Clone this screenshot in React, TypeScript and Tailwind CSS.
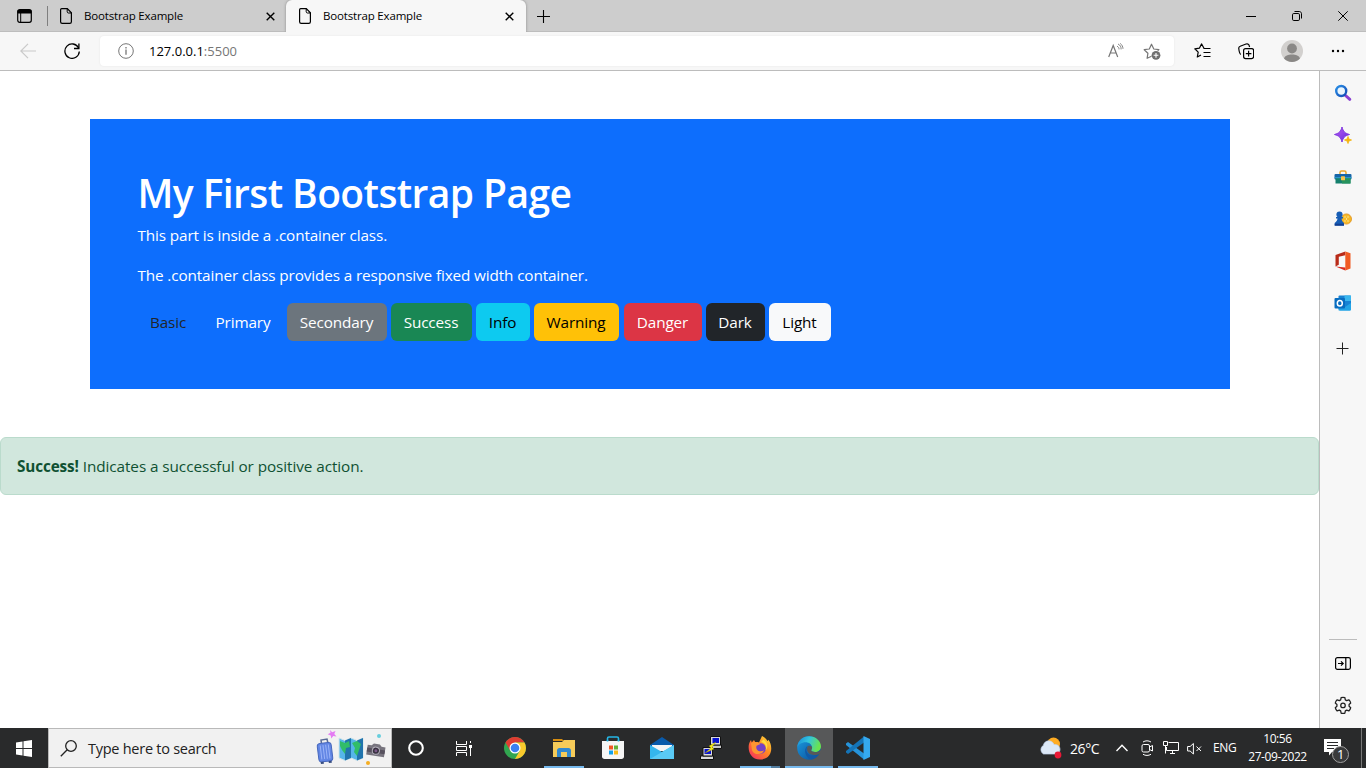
import type { ReactNode } from "react";

type IconProps = { w?: number; h?: number; vb?: string; className?: string; children: ReactNode };

function Icon({ w = 16, h, vb, className = "", children }: IconProps) {
  const height = h ?? w;
  return (
    <svg
      width={w}
      height={height}
      viewBox={vb ?? `0 0 ${w} ${height}`}
      fill="none"
      stroke="currentColor"
      strokeWidth="1"
      className={`block shrink-0 ${className}`}
    >
      {children}
    </svg>
  );
}

function DocIcon() {
  return (
    <Icon w={12} h={16}>
      <path d="M1.7.6h5.6l4.1 4.2v9c0 .9-.7 1.6-1.6 1.6H2.2C1.3 15.400.6 14.700.6 13.800V1.700C.6 1.100 1.100.6 1.700.6z" strokeWidth="1.200" />
      <path d="M7.200.8v3c0 .7.5 1.200 1.200 1.200h3" />
    </Icon>
  );
}

function TabClose() {
  return (
    <Icon w={9}>
      <path d="M.7.7l7.600 7.600M8.300.7L.7 8.300" strokeWidth="1.400" />
    </Icon>
  );
}

function TabStrip() {
  return (
    <div className="flex h-8 shrink-0 bg-[#cdcdcd] text-black shadow-[inset_0_-1px_0_#bdbdbd]">
      <div className="flex w-12 shrink-0 items-center border-r border-transparent pl-[17px]">
        <Icon w={15} h={14}>
          <rect x="0.700" y="0.700" width="13.600" height="12.600" rx="2" strokeWidth="1.200" />
          <path d="M1 1.500h13v2.500H1z" fill="currentColor" />
          <path d="M3.700 4v9" />
        </Icon>
      </div>
      <div className="-ml-px mt-[6px] h-5 w-px bg-[#7f7f7f]" />
      <div className="flex w-[238px] items-center rounded-br-[5px] pl-3">
        <DocIcon />
        <span className="ml-3 w-[182px] whitespace-nowrap text-[11.5px] leading-4 tracking-[-0.170px]">Bootstrap Example</span>
        <TabClose />
      </div>
      <div className="flex w-[240px] items-center rounded-t-[6px] bg-[#f7f7f7] pl-[13px] shadow-[0_0_3px_#888]">
        <DocIcon />
        <span className="ml-3 w-[182px] whitespace-nowrap text-[11.5px] leading-4 tracking-[-0.170px]">Bootstrap Example</span>
        <TabClose />
      </div>
      <div className="flex flex-1 items-center pl-[11px]">
        <Icon w={13}>
          <path d="M6.500 0v13M0 6.500h13" strokeWidth="1.100" />
        </Icon>
      </div>
      <div className="flex w-[46px] items-center justify-center">
        <Icon w={10} h={9}><path d="M0 4.500h10" /></Icon>
      </div>
      <div className="flex w-[46px] items-center justify-center">
        <Icon w={10}>
          <rect x="0.500" y="2.500" width="7" height="7" rx="1.300" />
          <path d="M2.500.5h4.800c1.200 0 2.200 1 2.200 2.200v4.800" />
        </Icon>
      </div>
      <div className="flex w-[46px] items-center justify-center">
        <Icon w={10}><path d="M.3.3l9.400 9.400M9.700.3L.3 9.700" /></Icon>
      </div>
    </div>
  );
}

function Toolbar() {
  return (
    <div className="flex h-[39px] shrink-0 items-center border-b border-[#bcbcbc] bg-[#f7f7f7] text-black">
      <div className="flex w-[100px] items-center pl-5">
        <Icon w={16} className="text-[#c9c9c9]">
          <path d="M8 .8L.8 8 8 15.200M1 8h15" strokeWidth="1.200" />
        </Icon>
        <Icon w={16} className="ml-7">
          <path d="M14.600 5A7.200 7.200 0 1 0 15.300 8.500" strokeWidth="1.300" />
          <path d="M14.900.6v4.900H10" strokeWidth="1.300" />
        </Icon>
      </div>
      <div className="flex h-[30px] w-[1074px] items-center rounded-[4px] bg-white pl-[18px] shadow-[0_0_2px_#e2e2e2]">
        <Icon w={16} className="text-[#767676]">
          <circle cx="8" cy="8" r="7.300" />
          <path d="M8 6.500v5.300M8 4v1.400" strokeWidth="1.300" />
        </Icon>
        <span className="ml-[15px] w-[959px] pt-px text-[13px] tracking-[0px]">
          127.0.0.1<span className="text-[#767676]">:5500</span>
        </span>
        <Icon w={16} h={15} className="-mt-px text-[#767676]">
          <path d="M.7 14L5.200 2.500 9.700 14M2.400 10h5.700" strokeWidth="1.200" />
          <path d="M9 3.200c1.400.6 2.100 1.800 2 3.200M10 1c2.200 1 3.300 3 3.100 5.400M12.200.4c1.700 1.300 2.700 3.100 2.800 5.400" strokeWidth=".9" />
        </Icon>
        <Icon w={18} h={17} className="ml-[19px] text-[#767676]">
          <path d="M8.500 13.200L4.100 15.300l.8-5-3.700-3.600 5.100-.7L8.500 1.200l2.300 4.800 5.100.7-1.200 1.200" strokeWidth="1.200" strokeLinejoin="round" />
          <circle cx="13" cy="12.300" r="4.400" fill="#6f6f6f" stroke="none" />
          <path d="M13 9.900v4.800M10.600 12.300h4.800" stroke="#fff" strokeWidth="1.100" />
        </Icon>
      </div>
      <div className="ml-[20px] flex items-center">
        <Icon w={17} h={16}>
          <path d="M10 5.300L7.500.9l-2 4.200-4.700.7 3.400 3.300-.9 4.900 3.700-2" strokeWidth="1.200" strokeLinejoin="round" />
          <path d="M9.500 5.500H16.500M9.500 9.500H16.500M9.500 13.500H16.500" strokeWidth="1.200" />
        </Icon>
        <Icon w={16} h={17} className="ml-[27px]">
          <path d="M2.800 11.500C1.700 10.700 1 7.500.8 5.700.6 4.400 1 3.600 2.200 3.200L8 1c1.600-.5 2.400-.3 3 1.100l.6 1.900" strokeWidth="1.200" />
          <rect x="5.600" y="5.600" width="10" height="10" rx="2" strokeWidth="1.200" />
          <path d="M10.600 7.800v5.600M7.800 10.600h5.600" strokeWidth="1.200" />
        </Icon>
        <Icon w={22} className="ml-[27px]">
          <circle cx="11" cy="11" r="11" fill="#d2d0ce" stroke="none" />
          <circle cx="11" cy="8.500" r="4.900" fill="#8a8886" stroke="none" />
          <path d="M3 18.500c1-3 4-4 8-4s7 1 8 4A11 11 0 0 1 3 18.500z" fill="#8a8886" stroke="none" />
        </Icon>
        <Icon w={14} h={4} className="ml-7">
          <g fill="currentColor" stroke="none">
            <circle cx="2" cy="2" r="1.200" /><circle cx="7" cy="2" r="1.200" /><circle cx="12" cy="2" r="1.200" />
          </g>
        </Icon>
      </div>
    </div>
  );
}

const buttons = [
  { label: "Basic", className: "w-[61px] text-[#212529]" },
  { label: "Primary", className: "w-[80px] pl-px text-white" },
  { label: "Secondary", className: "w-[100px] bg-[#6c757d] text-white" },
  { label: "Success", className: "w-[81px] bg-[#198754] text-white" },
  { label: "Info", className: "w-[54px] bg-[#0dcaf0] text-black" },
  { label: "Warning", className: "w-[85px] bg-[#ffc107] text-black" },
  { label: "Danger", className: "ml-px w-[78px] bg-[#dc3545] text-white" },
  { label: "Dark", className: "w-[59px] bg-[#212529] text-white" },
  { label: "Light", className: "w-[62px] bg-[#f8f9fa] text-black" },
];

function Page() {
  return (
    <main className="flex-1 bg-white pt-12 text-[15.3px] tracking-[-0.130px]">
      <section className="mx-auto h-[270px] w-[1140px] bg-[#0d6efd] p-12 text-white">
        <h1 className="mb-[6px] whitespace-nowrap pt-[2px] text-[39px] font-semibold leading-[48px] tracking-[-0.600px]">My First Bootstrap Page</h1>
        <p className="mb-4 whitespace-nowrap leading-6">This part is inside a .container class.</p>
        <p className="mb-4 whitespace-nowrap leading-6">The .container class provides a responsive fixed width container.</p>
        <div className="flex gap-1">
          {buttons.map((b) => (
            <button key={b.label} className={`h-[38px] shrink-0 rounded-[6px] pb-px text-center leading-6 ${b.className}`}>
              {b.label}
            </button>
          ))}
        </div>
      </section>
      <div className="mt-12 h-[58px] whitespace-nowrap rounded-[6px] border border-[#badbcc] bg-[#d1e7dd] p-4 leading-6 tracking-[-0.070px] text-[#0f5132]">
        <strong className="font-bold tracking-[-0.130px]">Success!</strong> Indicates a successful or positive action.
      </div>
    </main>
  );
}

function Sidebar() {
  return (
    <aside className="flex w-[47px] shrink-0 flex-col items-center border-l border-[#bcbcbc] bg-[#f7f7f7] pt-[13px] text-[#222]">
      <div className="flex flex-col items-center gap-6">
        <Icon w={18}>
          <defs>
            <linearGradient id="lens" x1="0" y1="0" x2="1" y2="1"><stop stopColor="#2b8fe6" /><stop offset="1" stopColor="#124bb5" /></linearGradient>
          </defs>
          <path d="M11 11l4.800 4.300" stroke="#8a3fd0" strokeWidth="3" strokeLinecap="round" />
          <circle cx="7.200" cy="7" r="5" fill="#e9f5fd" stroke="url(#lens)" strokeWidth="2.400" />
        </Icon>
        <Icon w={18}>
          <defs>
            <linearGradient id="spark" x1="0" y1="0" x2="1" y2="1"><stop stopColor="#c05cf5" /><stop offset="1" stopColor="#5e28dc" /></linearGradient>
          </defs>
          <path d="M8 1c1.300 4.700 2.600 6 7.500 7.500C10.600 10 9.300 11.300 8 16c-1.300-4.700-2.600-6-7.500-7.500C5.400 7 6.700 5.700 8 1z" fill="url(#spark)" stroke="#7f37df" strokeWidth="1" strokeLinejoin="round" />
          <path d="M14 10.500c.6 2.500 1 3 3.500 3.500-2.500.5-3 1-3.500 3.500-.6-2.500-1-3-3.500-3.500 2.500-.5 3-1 3.500-3.500z" fill="#f5b40e" stroke="#f5b40e" strokeWidth=".9" />
        </Icon>
        <Icon w={18} vb="0 -1 18 18">
          <path d="M6 5V3.500C6 2.500 6.500 2 7.500 2h3c1 0 1.500.5 1.500 1.500V5" stroke="#e9a72c" strokeWidth="1.500" />
          <rect x=".5" y="5" width="17" height="5.500" rx="1" fill="#1665a8" stroke="none" />
          <path d="M1.500 9h15v5.500h-15z" fill="#15806d" stroke="none" />
          <path d="M8 9h8.500v5.500H8z" fill="#27935d" stroke="none" />
          <path d="M.5 8.700h17" stroke="#2f9fd0" />
          <rect x="7" y="7.300" width="4" height="4" rx=".6" fill="#f5c34a" stroke="none" />
        </Icon>
        <Icon w={18}>
          <circle cx="12.400" cy="9" r="5.100" fill="#f6b928" stroke="#df8e17" strokeWidth=".8" />
          <path d="M10.500 7h1M13.500 7h1M12 9h1M10.500 11h1M13.500 11h1" stroke="#fff1a4" strokeWidth="1.400" />
          <g fill="#175db5" stroke="none">
            <circle cx="5.500" cy="4.600" r="3.100" />
            <path d="M2 7h7v1.500H7.500c.1 2 .9 3.100 2.500 4.500v2.500H.7V13c1.600-1.400 2.700-2.500 2.800-4.500H2z" />
          </g>
          <path d="M.7 14.700H10" stroke="#113e91" strokeWidth="2" />
        </Icon>
        <Icon w={18} h={20} className="-my-px">
          <path d="M11.300.5L1.500 4v11.500l3.300-1.800V5.800l6.500-1.500z" fill="#b92b19" stroke="none" />
          <path d="M11.300.5l5.200 1.800v15.200l-5.200 2z" fill="#f05a22" stroke="none" />
          <path d="M1.500 15.500l9.800 1.100v2.900z" fill="#d92c20" stroke="none" />
        </Icon>
        <Icon w={18}>
          <rect x="4.500" y="1.500" width="12.500" height="14" rx="1" fill="#1783d4" stroke="none" />
          <path d="M10.500 1.500H17V7h-6.500z" fill="#39b6ee" stroke="none" />
          <path d="M4.500 10l6.500 3 6-4v6.500c0 .8-.4 1.200-1.200 1.200H5.700c-.7 0-1.200-.4-1.200-1.200z" fill="#22a4e6" stroke="none" />
          <rect x=".5" y="4" width="10.500" height="10.500" rx="1" fill="#086dc0" stroke="none" />
          <ellipse cx="5.800" cy="9.200" rx="2.500" ry="2.800" stroke="#fff" strokeWidth="1.500" />
        </Icon>
      </div>
      <Icon w={13} className="mr-px mt-[30px]"><path d="M6.500.5v12M.5 6.500h12" /></Icon>
      <div className="mt-auto h-px w-7 bg-[#bcbcbc]" />
      <Icon w={16} h={13} className="mt-[17px] text-black">
        <rect x=".6" y=".6" width="14.800" height="11.800" rx="1.800" strokeWidth="1.200" />
        <path d="M10.800.5v12M3 6.500h5M6 4.300l2.200 2.200L6 8.700" strokeWidth="1.200" />
      </Icon>
      <Icon w={18} vb="0 0 24 24" className="mb-[14px] mt-[26px]">
        <path d="M9.500 2.200q2.500-1 5 0l.6 2.900 1.800 1 2.900-1q2 1.800 2.500 4.300l-2.200 2v2.200l2.200 2q-.5 2.500-2.500 4.300l-2.900-1-1.800 1-.6 2.900q-2.500 1-5 0l-.6-2.900-1.800-1-2.900 1q-2-1.800-2.500-4.300l2.200-2v-2.200l-2.200-2q.5-2.500 2.500-4.300l2.900 1 1.800-1z" strokeWidth="1.700" strokeLinejoin="round" />
        <circle cx="12" cy="12.500" r="3" strokeWidth="1.700" />
      </Icon>
    </aside>
  );
}

function TaskButton({ children, bar = "" }: { children: ReactNode; bar?: string }) {
  return (
    <div className="flex h-10 w-[49px] shrink-0 flex-col items-center">
      <div className="flex flex-1 items-center justify-center pt-px">{children}</div>
      <div className={`h-[2px] w-10 ${bar}`} />
    </div>
  );
}

function SearchArt() {
  return (
    <Icon w={74} h={38}>
      <path d="M15 1l2.200 2.200L20.500 2l-1.200 3 2.200 2.500-3.200-.4-2 2.400-.6-3-3-1.200 2.800-1.500z" fill="#e47bf3" stroke="none" />
      <path d="M6.500 14.500L6 11l6-1 .8 3.500" stroke="#596b96" strokeWidth="1.500" />
      <g transform="translate(.5 -1) rotate(-7 9 24)">
        <rect x="2.500" y="15" width="14" height="18.500" rx="3" fill="#6286e4" stroke="#4667bd" />
        <path d="M5.500 17v14M8.300 17v14M11 17v14M13.700 17v14" stroke="#9bb4f8" />
        <path d="M4 34.500h3M12 34.500h3" stroke="#384d80" strokeWidth="2" />
      </g>
      <path d="M24 9l6 2.500 6-2.500 6 2.500 6-2.500v20l-6 2.500-6-2.500-6 2.500-6-2.500z" fill="#55b5e9" stroke="#d3e4e9" />
      <path d="M30 11.500l6-2.500v20l-6 2.500zM42 11.500l6-2.500v20l-6 2.500z" fill="#2174ad" stroke="none" />
      <path d="M25 12l5 2 4-2 1 6-4 1-1 6-3-4-2-4zM37 14l5-2 4 3-2 6-2 6-3-4 1-4z" fill="#31bd69" stroke="none" />
      <g transform="rotate(9 61 21)">
        <path d="M52 17h4l2-2h6l2 2h4v10H52z" fill="#77747e" stroke="none" />
        <path d="M52 20h18v4H52z" fill="#57515e" stroke="none" />
        <circle cx="61" cy="21.700" r="3.600" fill="#37313f" stroke="#b1adb9" /><circle cx="61" cy="21.700" r="1.500" fill="#785785" stroke="none" />
      </g>
      <circle cx="64" cy="7" r="2" fill="#67cedd" stroke="none" />
      <circle cx="53" cy="34" r="2" fill="#f5ad20" stroke="none" />
    </Icon>
  );
}

function Taskbar() {
  return (
    <footer className="flex h-10 shrink-0 items-center bg-[#292a2b] text-white">
      <div className="flex h-full w-12 shrink-0 items-center justify-center">
        <Icon w={16} h={17}>
          <path d="M0 2.500l6.500-1v6.500H0zM7.500 1.300L16 0v8H7.500zM0 9h6.500v6.500L0 14.500zM7.500 9H16v8l-8.500-1.300z" fill="#fff" stroke="none" />
        </Icon>
      </div>
      <div className="flex h-full w-[344px] shrink-0 items-center border border-[#b9b9b9] bg-[#f1f1f1] pl-[11px] text-[#222]">
        <Icon w={17}>
          <circle cx="11" cy="6" r="5.300" strokeWidth="1.300" /><path d="M7.200 9.800L.8 16.200" strokeWidth="1.300" />
        </Icon>
        <span className="ml-[11px] w-[227px] whitespace-nowrap pt-px text-[14.5px] tracking-[-0.260px]">Type here to search</span>
        <SearchArt />
      </div>
      <div className="flex w-12 shrink-0 justify-center">
        <Icon w={16}><circle cx="8" cy="8" r="6.800" strokeWidth="2.100" /></Icon>
      </div>
      <div className="flex w-12 shrink-0 justify-center">
        <Icon w={16} h={15}>
          <path d="M.5 0v3.500h10V0M.5 15v-3.500h10V15M.5 5.500h10v4H.5zM14.500 0v2M14.500 7v8" />
          <path d="M13 4h3v3h-3z" fill="#fff" stroke="none" />
        </Icon>
      </div>
      <div className="flex w-[2px] shrink-0" />
      <TaskButton>
        <Icon w={22}>
          <g stroke="none">
            <circle cx="11" cy="11" r="11" fill="#31a650" />
            <path d="M1.500 5.500A11 11 0 0 1 20.500 5.500H11L6.200 13.700z" fill="#df3d32" />
            <path d="M20.500 5.500A11 11 0 0 1 11 22l4.800-8.200L11 5.500z" fill="#fac92c" />
            <circle cx="11" cy="11" r="5.500" fill="#fff" /><circle cx="11" cy="11" r="4.300" fill="#3b7ff0" />
          </g>
        </Icon>
      </TaskButton>
      <TaskButton bar="bg-[#76b9ed]">
        <Icon w={22} h={18}>
          <g stroke="none">
            <path d="M0 0h9l2 2H0z" fill="#d78d10" /><path d="M0 3h9l2-2h11v17H0z" fill="#f6cb59" />
            <path d="M4 18v-6.500C4 10 5 9 6.500 9h9c1.500 0 2.500 1 2.500 2.500V18h-4v-5H8v5z" fill="#3289cf" />
          </g>
        </Icon>
      </TaskButton>
      <TaskButton>
        <Icon w={24} h={24}>
          <path d="M6.500 7V2.500c0-1 .5-1.500 1.500-1.500h8c1 0 1.500.5 1.500 1.500V7" stroke="#25b7e6" strokeWidth="1.600" />
          <path d="M1 5h22v15.500c0 1.500-1 2.500-2.500 2.500h-17C2 23 1 22 1 20.500z" fill="#f5f5f5" stroke="none" />
          <path d="M6.500 5.500V4M17.500 5.500V4" stroke="#25b7e6" strokeWidth="1.600" />
          <path d="M8 9.500h4v4H8z" fill="#f15724" stroke="none" /><path d="M13 9.500h4v4h-4z" fill="#63b33a" stroke="none" />
          <path d="M8 14.500h4v4H8z" fill="#11a0e9" stroke="none" /><path d="M13 14.500h4v4h-4z" fill="#f8bb17" stroke="none" />
        </Icon>
      </TaskButton>
      <TaskButton>
        <Icon w={24} h={22}>
          <g stroke="none">
            <path d="M0 8L12 0l12 8v3H0z" fill="#095aaa" /><path d="M2 8h20v6H2z" fill="#f4f4f4" />
            <path d="M0 8l12 7L24 8v14H0z" fill="#35b6ed" /><path d="M0 22l24-14v14z" fill="#5acaf5" />
          </g>
        </Icon>
      </TaskButton>
      <TaskButton>
        <Icon w={22} h={24}>
          <g stroke="#111">
            <path d="M10 9h11.500v3.500H10z" fill="#c9c9c9" /><path d="M10.500.5h10V9h-10z" fill="#d9d9d9" /><path d="M12.500 2h6.500v5h-6.500z" fill="#0712d2" stroke="none" />
            <path d="M.5 20h13v3.500H.5z" fill="#d9d9d9" /><path d="M3 11.500h9.500V20H3z" fill="#d9d9d9" /><path d="M4.500 13h6.500v5H4.500z" fill="#0712d2" stroke="none" />
          </g>
          <path d="M16 6l-7 4 2 2-6 5 9-4-2-2z" fill="#f8ec12" stroke="#8c8412" strokeWidth=".4" />
        </Icon>
      </TaskButton>
      <TaskButton bar="bg-[linear-gradient(90deg,#76b9ed_31px,#527d9f_31px)]">
        <Icon w={24}>
          <defs>
            <linearGradient id="fox" x1="1" y1="0" x2=".1" y2="1"><stop stopColor="#ffe43f" /><stop offset=".45" stopColor="#ff8d22" /><stop offset="1" stopColor="#f72b60" /></linearGradient>
          </defs>
          <path d="M14 0c4 2 5 4 5.200 5 .8-.2 1.200-.7 1.300-1.200 5 7 3.700 19.500-8.500 19.700C2.500 23.500-.5 14.500 1 8c.3-1.500 1-2.700 2-4l.7 2.500L6 4l1.300 2.200c1.200-.3 2.600-.1 3.700.3L14 0z" fill="url(#fox)" stroke="none" />
          <circle cx="12.500" cy="12.500" r="5.300" fill="#7441c5" stroke="none" />
          <path d="M3 7c3-2 7-1 9.500 1L8.500 9.700c-1.500 5 4 6.800 7.500 4.500-1.500 5-10 5.300-12 0z" fill="#ff9631" stroke="none" />
          <path d="M13 6c4 .5 6 4 4.500 8.500 2.800-3 2.500-8-2-11z" fill="#ffdd3c" stroke="none" />
        </Icon>
      </TaskButton>
      <div className="ml-px flex h-10 w-[48px] shrink-0 flex-col items-center bg-[#575859]">
        <div className="flex flex-1 items-center pt-px">
          <Icon w={24}>
            <defs>
              <linearGradient id="edgeA" x1="0" y1="0" x2="1" y2=".3"><stop stopColor="#1685d8" /><stop offset=".5" stopColor="#32c5de" /><stop offset="1" stopColor="#69e250" /></linearGradient>
              <linearGradient id="edgeB" x1="0" y1="0" x2="1" y2="1"><stop stopColor="#1c9ce1" /><stop offset="1" stopColor="#084b95" /></linearGradient>
            </defs>
            <g stroke="none">
              <circle cx="12" cy="12" r="11.800" fill="url(#edgeB)" />
              <path d="M.3 11.500C.5 4.500 6 .2 12 .2c7 0 12 5 12 10.300 0 3.500-2.800 5.500-6 5.500-2 0-3.800-.8-3.800-1.700 0-.6.9-1 .9-2.700C15 8.500 12 6.300 8.600 6.300 4.500 6.300 1 8.700.3 11.500z" fill="url(#edgeA)" />
              <path d="M10.500 9.700c-5 3.800-1.500 13.300 4.500 13.700 2.800-.7 5.200-2.300 6.800-4.600-6.300 2.600-12.300.2-12.300-4.800 0-1.600.3-3 1-4.300z" fill="#1258a5" />
              <path d="M10.800 10c-2.200 4.300.2 8.300 5.500 9 3 .4 6-.6 7.700-2.300V14c-1.500 1.500-3.700 2.300-6 2.100-2.200-.2-3.800-.9-3.800-1.800 0-.6.9-1 .9-2.700 0-1.300-1.500-2.600-4.300-1.600z" fill="#585959" />
            </g>
          </Icon>
        </div>
        <div className="h-[2px] w-full bg-[#76b9ed]" />
      </div>
      <TaskButton bar="bg-[#76b9ed]">
        <Icon w={24}>
          <g stroke="none">
            <path d="M0 7.500L2 6l16 11.500v6L0 9z" fill="#2694db" />
            <path d="M0 16.500L2 18 18 6.500v-6L0 15z" fill="#1474b8" />
            <path d="M17.500 0L24 3v18l-6.500 3z" fill="#35a9ef" />
          </g>
        </Icon>
      </TaskButton>
      <div className="ml-auto flex h-full w-[322px] shrink-0 items-center">
        <Icon w={24} h={22} className="-ml-px mr-px">
          <circle cx="15.500" cy="7" r="6.500" fill="#ffac23" stroke="none" />
          <path d="M5.500 17a5 5 0 0 1-.2-8.600C7 2 14.500 3 16 7.500c4-.3 6 2 6 5 0 2.800-2 4.500-4.500 4.500z" fill="#dce8f7" stroke="#c0d1eb" strokeWidth=".7" />
          <circle cx="20" cy="18" r="3.400" fill="#e81937" stroke="none" />
        </Icon>
        <span className="ml-[7px] w-[46px] whitespace-nowrap text-[14px] tracking-[-0.400px]">26°C</span>
        <Icon w={12} h={8}><path d="M.5 7L6 1.300 11.500 7" strokeWidth="1.400" /></Icon>
        <Icon w={13} h={16} className="ml-[13px]">
          <rect x="1" y="4.500" width="7.500" height="7.500" rx="1.500" /><path d="M8.500 7l3-1.500v5.500l-3-1.500M2 2c2.500-1.600 5.500-1.600 8 0M2 14.300c2.500 1.500 5.500 1.500 8 0" />
        </Icon>
        <Icon w={16} h={14} className="ml-[9px]">
          <path d="M5.500 1.500h10v8h-12V6M7 12.500h5M9.500 9.500v3M.5.5h4v4h-4zM2.500 4.500v8" />
        </Icon>
        <Icon w={15} h={13} className="ml-[8px]">
          <path d="M.6 4.500h2.500l3.300-3v10.500l-3.300-3H.6zM9.500 4.500l4.500 4.500M14 4.500L9.500 9" />
        </Icon>
        <span className="ml-[11px] w-[27px] text-[12px] tracking-[-0.400px]">ENG</span>
        <div className="flex w-[75px] flex-col items-center text-[12px] leading-[18px] tracking-[-0.400px]">
          <span>10:56</span><span className="whitespace-nowrap">27-09-2022</span>
        </div>
        <Icon w={26} h={27} className="ml-[9px] mt-2">
          <path d="M0 0h17v13H8l-3 3.500V13H0z" fill="#fff" stroke="none" />
          <path d="M3 3.500h11M3 6.500h11M3 9.500h7" stroke="#292a2b" />
          <circle cx="16.500" cy="15.500" r="8" fill="#393a3b" stroke="#a0a0a0" />
          <text x="13" y="20" fill="#fff" stroke="none" fontSize="13">1</text>
        </Icon>
      </div>
      <div className="mr-1 h-full w-px bg-[#777]" />
    </footer>
  );
}

export default function App() {
  return (
    <div className="flex h-[768px] w-[1366px] flex-col overflow-hidden font-['Open_Sans','Noto_Sans',sans-serif]">
      <TabStrip />
      <Toolbar />
      <div className="flex flex-1">
        <Page />
        <Sidebar />
      </div>
      <Taskbar />
    </div>
  );
}
